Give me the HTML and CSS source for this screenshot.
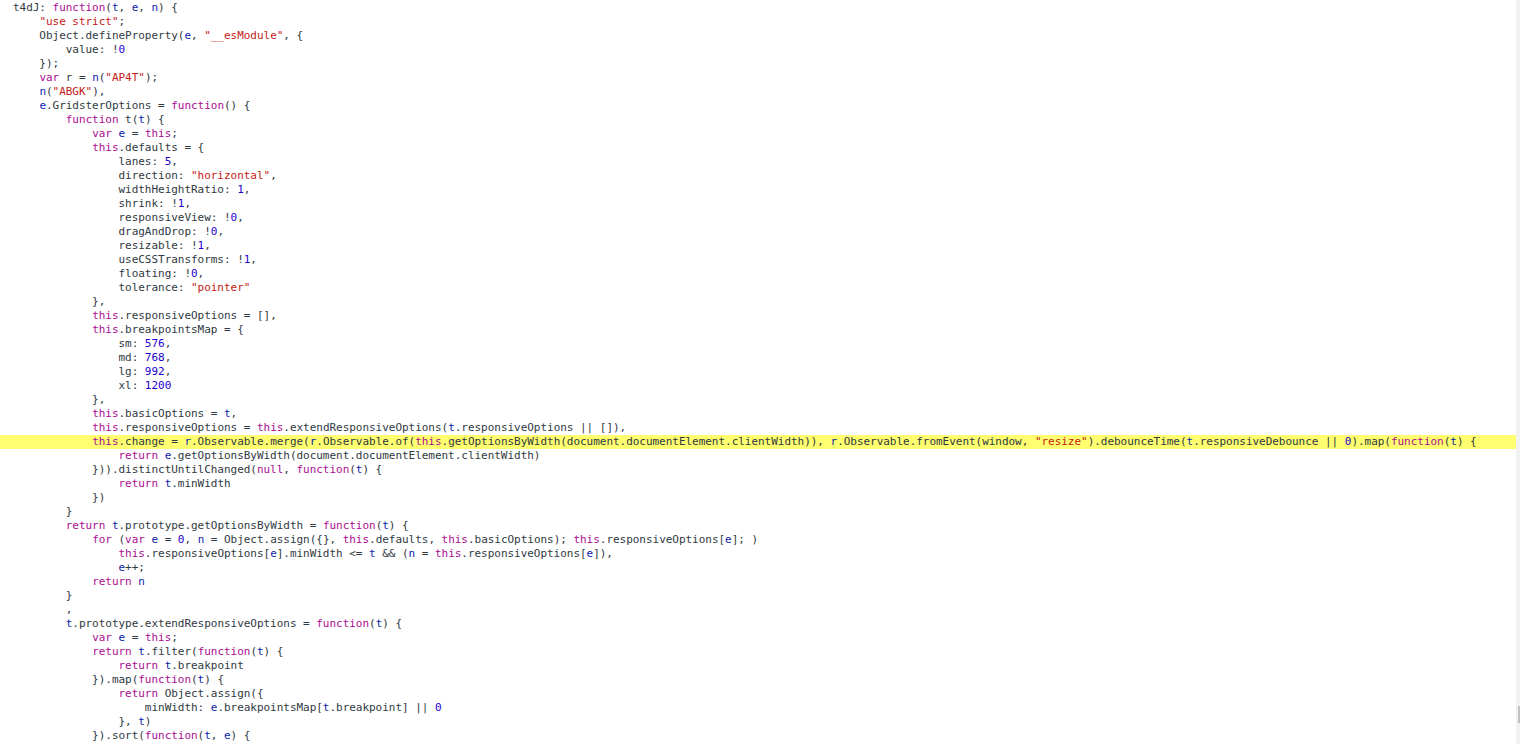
FILE: index.html
```html
<!DOCTYPE html>
<html lang="en">
<head>
<meta charset="utf-8">
<title>Sources</title>
<link rel="stylesheet" href="styles.css">
</head>
<body>
<div class="viewer">
<div class="code">
<code class="line">t4dJ: <b class="k">function</b>(<b class="v">t</b>, <b class="v">e</b>, <b class="v">n</b>) {</code>
<code class="line">    <b class="s">"use strict"</b>;</code>
<code class="line">    Object.defineProperty(<b class="v">e</b>, <b class="s">"__esModule"</b>, {</code>
<code class="line">        value: !<b class="n">0</b></code>
<code class="line">    });</code>
<code class="line">    <b class="k">var</b> r = <b class="v">n</b>(<b class="s">"AP4T"</b>);</code>
<code class="line">    <b class="v">n</b>(<b class="s">"ABGK"</b>),</code>
<code class="line">    <b class="v">e</b>.GridsterOptions = <b class="k">function</b>() {</code>
<code class="line">        <b class="k">function</b> t(<b class="v">t</b>) {</code>
<code class="line">            <b class="k">var</b> <b class="v">e</b> = <b class="k">this</b>;</code>
<code class="line">            <b class="k">this</b>.defaults = {</code>
<code class="line">                lanes: <b class="n">5</b>,</code>
<code class="line">                direction: <b class="s">"horizontal"</b>,</code>
<code class="line">                widthHeightRatio: <b class="n">1</b>,</code>
<code class="line">                shrink: !<b class="n">1</b>,</code>
<code class="line">                responsiveView: !<b class="n">0</b>,</code>
<code class="line">                dragAndDrop: !<b class="n">0</b>,</code>
<code class="line">                resizable: !<b class="n">1</b>,</code>
<code class="line">                useCSSTransforms: !<b class="n">1</b>,</code>
<code class="line">                floating: !<b class="n">0</b>,</code>
<code class="line">                tolerance: <b class="s">"pointer"</b></code>
<code class="line">            },</code>
<code class="line">            <b class="k">this</b>.responsiveOptions = [],</code>
<code class="line">            <b class="k">this</b>.breakpointsMap = {</code>
<code class="line">                sm: <b class="n">576</b>,</code>
<code class="line">                md: <b class="n">768</b>,</code>
<code class="line">                lg: <b class="n">992</b>,</code>
<code class="line">                xl: <b class="n">1200</b></code>
<code class="line">            },</code>
<code class="line">            <b class="k">this</b>.basicOptions = <b class="v">t</b>,</code>
<code class="line">            <b class="k">this</b>.responsiveOptions = <b class="k">this</b>.extendResponsiveOptions(<b class="v">t</b>.responsiveOptions || []),</code>
<code class="line current">            <b class="k">this</b>.change = <b class="v">r</b>.Observable.merge(<b class="v">r</b>.Observable.of(<b class="k">this</b>.getOptionsByWidth(document.documentElement.clientWidth)), <b class="v">r</b>.Observable.fromEvent(window, <b class="s">"resize"</b>).debounceTime(<b class="v">t</b>.responsiveDebounce || <b class="n">0</b>).map(<b class="k">function</b>(<b class="v">t</b>) {</code>
<code class="line">                <b class="k">return</b> <b class="v">e</b>.getOptionsByWidth(document.documentElement.clientWidth)</code>
<code class="line">            })).distinctUntilChanged(<b class="k">null</b>, <b class="k">function</b>(<b class="v">t</b>) {</code>
<code class="line">                <b class="k">return</b> <b class="v">t</b>.minWidth</code>
<code class="line">            })</code>
<code class="line">        }</code>
<code class="line">        <b class="k">return</b> <b class="v">t</b>.prototype.getOptionsByWidth = <b class="k">function</b>(<b class="v">t</b>) {</code>
<code class="line">            <b class="k">for</b> (<b class="k">var</b> <b class="v">e</b> = <b class="n">0</b>, <b class="v">n</b> = Object.assign({}, <b class="k">this</b>.defaults, <b class="k">this</b>.basicOptions); <b class="k">this</b>.responsiveOptions[<b class="v">e</b>]; )</code>
<code class="line">                <b class="k">this</b>.responsiveOptions[<b class="v">e</b>].minWidth &lt;= <b class="v">t</b> &amp;&amp; (<b class="v">n</b> = <b class="k">this</b>.responsiveOptions[<b class="v">e</b>]),</code>
<code class="line">                <b class="v">e</b>++;</code>
<code class="line">            <b class="k">return</b> <b class="v">n</b></code>
<code class="line">        }</code>
<code class="line">        ,</code>
<code class="line">        <b class="v">t</b>.prototype.extendResponsiveOptions = <b class="k">function</b>(<b class="v">t</b>) {</code>
<code class="line">            <b class="k">var</b> <b class="v">e</b> = <b class="k">this</b>;</code>
<code class="line">            <b class="k">return</b> <b class="v">t</b>.filter(<b class="k">function</b>(<b class="v">t</b>) {</code>
<code class="line">                <b class="k">return</b> <b class="v">t</b>.breakpoint</code>
<code class="line">            }).map(<b class="k">function</b>(<b class="v">t</b>) {</code>
<code class="line">                <b class="k">return</b> Object.assign({</code>
<code class="line">                    minWidth: <b class="v">e</b>.breakpointsMap[<b class="v">t</b>.breakpoint] || <b class="n">0</b></code>
<code class="line">                }, <b class="v">t</b>)</code>
<code class="line">            }).sort(<b class="k">function</b>(<b class="v">t</b>, <b class="v">e</b>) {</code>
</div>
<div class="track"><div class="thumb"></div></div>
</div>
</body>
</html>
```
FILE: styles.css
```css
html, body {
  margin: 0;
  height: 100%;
  background: #fff;
  overflow: hidden;
}
.viewer {
  display: flex;
  height: 744px;
}
.code {
  flex: 1;
  padding-top: 1px;
  overflow: hidden;
  color: #303942;
}
.line {
  display: block;
  height: 14px;
  padding-left: 13px;
  font-family: "DejaVu Sans Mono", monospace;
  font-size: 11px;
  letter-spacing: -0.03px;
  line-height: 14px;
  white-space: pre;
}
.line b { font-weight: normal; }
.current { background: #ffff70; }
.k { color: #aa0d91; }
.s { color: #c41a16; }
.v { color: #0d22aa; }
.n { color: #1c00cf; }
.track {
  position: relative;
  flex: 0 0 4px;
  background: #f1f1f1;
}
.thumb {
  position: absolute;
  right: 0;
  top: 706px;
  width: 2px;
  height: 17px;
  background: #c1c1c1;
}
```
